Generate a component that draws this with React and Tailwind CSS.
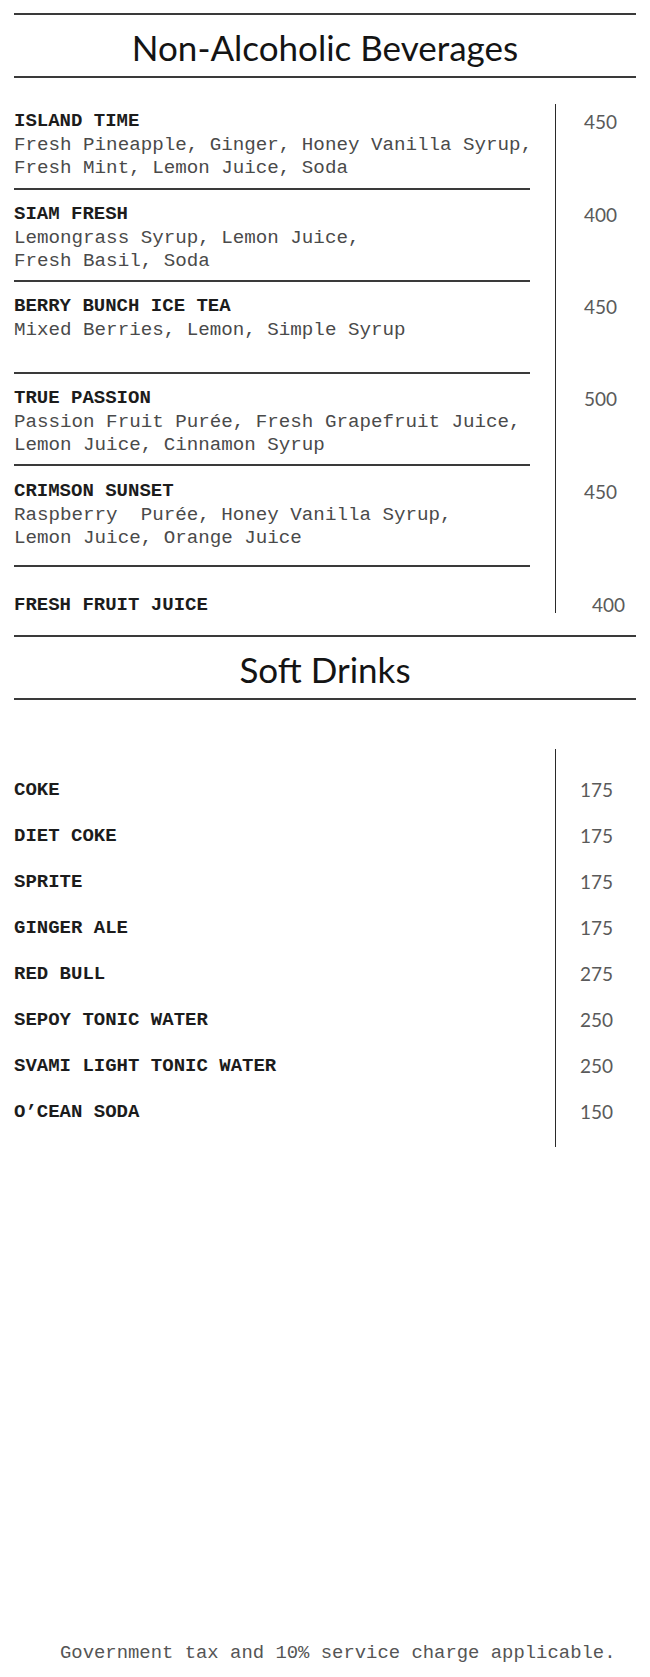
import React from "react";

function Row({ name, desc = [], price, leftCls, priceCls }) {
  return (
    <div className="flex">
      <div className={`w-[516px] ${leftCls}`}>
        <div className="font-bold text-[#1c1c1c]">{name}</div>
        {desc.map((d, i) => (
          <div key={i} className="text-[19.2px] text-[#4a4a4a] whitespace-pre">
            {d}
          </div>
        ))}
      </div>
      <div className="w-[25px] shrink-0" />
      <div
        className={`border-l border-[#2a2a2a] font-['Lato',sans-serif] text-[19px] text-[#5a5a5a] ${priceCls}`}
      >
        {price}
      </div>
    </div>
  );
}

function Title({ children }) {
  return (
    <div className="h-[61px] pt-[5px] text-center font-['Lato',sans-serif] text-[35px] leading-[55px] text-[#141414]">
      {children}
    </div>
  );
}

const soft = [
  ["COKE", "175"],
  ["DIET COKE", "175"],
  ["SPRITE", "175"],
  ["GINGER ALE", "175"],
  ["RED BULL", "275"],
  ["SEPOY TONIC WATER", "250"],
  ["SVAMI LIGHT TONIC WATER", "250"],
  ["O\u2019CEAN SODA", "150"],
];

export default function App() {
  return (
    <div className="w-[650px] min-h-[1677px] bg-white px-[14px] pt-[13px] flex flex-col font-['Liberation_Mono',monospace] text-[19px] leading-[23.5px]">
      {/* Section 1 */}
      <div className="border-t-2 border-[#3a3a3a]">
        <Title>Non-Alcoholic Beverages</Title>
      </div>
      <div className="border-t-2 border-[#3a3a3a] pt-[26px]">
        <Row
          name="ISLAND TIME"
          desc={[
            "Fresh Pineapple, Ginger, Honey Vanilla Syrup,",
            "Fresh Mint, Lemon Juice, Soda",
          ]}
          price="450"
          leftCls="h-[86px] pt-[6px] border-b-2 border-[#3a3a3a]"
          priceCls="pt-[6px] pl-[28px]"
        />
        <Row
          name="SIAM FRESH"
          desc={["Lemongrass Syrup, Lemon Juice,", "Fresh Basil, Soda"]}
          price="400"
          leftCls="h-[92px] pt-[13px] border-b-2 border-[#3a3a3a]"
          priceCls="pt-[13px] pl-[28px]"
        />
        <Row
          name="BERRY BUNCH ICE TEA"
          desc={["Mixed Berries, Lemon, Simple Syrup"]}
          price="450"
          leftCls="h-[92px] pt-[13px] border-b-2 border-[#3a3a3a]"
          priceCls="pt-[13px] pl-[28px]"
        />
        <Row
          name="TRUE PASSION"
          desc={[
            "Passion Fruit Pur\u00e9e, Fresh Grapefruit Juice,",
            "Lemon Juice, Cinnamon Syrup",
          ]}
          price="500"
          leftCls="h-[92px] pt-[13px] border-b-2 border-[#3a3a3a]"
          priceCls="pt-[13px] pl-[28px]"
        />
        <Row
          name="CRIMSON SUNSET"
          desc={[
            "Raspberry  Pur\u00e9e, Honey Vanilla Syrup,",
            "Lemon Juice, Orange Juice",
          ]}
          price="450"
          leftCls="h-[101px] pt-[14px] border-b-2 border-[#3a3a3a]"
          priceCls="pt-[14px] pl-[28px]"
        />
        <Row
          name="FRESH FRUIT JUICE"
          price="400"
          leftCls="h-[46px] pt-[30px] leading-[16px]"
          priceCls="pt-[30px] pl-[36px] leading-[16px]"
        />
      </div>

      {/* Section 2 */}
      <div className="mt-[22px] border-t-2 border-[#3a3a3a]">
        <Title>Soft Drinks</Title>
      </div>
      <div className="border-t-2 border-[#3a3a3a] pt-[49px]">
        <div className="flex">
          <div className="w-[541px] pt-[18px] pb-[12px]">
            {soft.map(([n]) => (
              <div key={n} className="h-[46px] leading-[46px] font-bold text-[#1c1c1c]">
                {n}
              </div>
            ))}
          </div>
          <div className="border-l border-[#2a2a2a] pt-[18px] pb-[12px] pl-[24px] font-['Lato',sans-serif] text-[19px] text-[#5a5a5a]">
            {soft.map(([n, p]) => (
              <div key={n} className="h-[46px] leading-[46px]">
                {p}
              </div>
            ))}
          </div>
        </div>
      </div>

      {/* Footer */}
      <div className="mt-auto pb-[13px] pl-[46px] text-[18.9px] leading-[22px] text-[#555] whitespace-pre">
        Government tax and 10% service charge applicable.
      </div>
    </div>
  );
}
